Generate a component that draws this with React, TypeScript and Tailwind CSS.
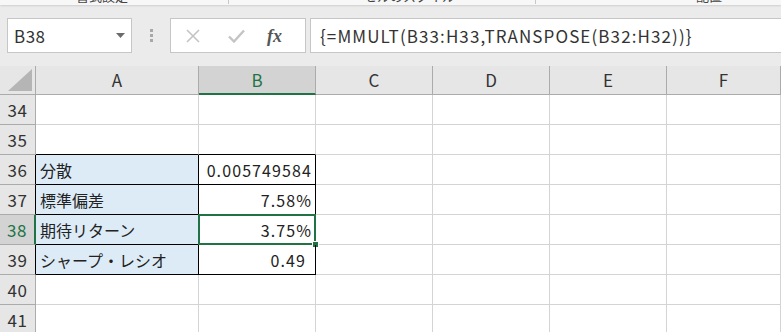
import React from 'react';

const font = { fontFamily: '"Noto Sans CJK JP", "Noto Sans", sans-serif' };

const cols = ['A', 'B', 'C', 'D', 'E', 'F'];

type Row = { n: number; a?: string; b?: string; pad?: boolean };

const rows: Row[] = [
  { n: 34 },
  { n: 35 },
  { n: 36, a: '分散', b: '0.005749584' },
  { n: 37, a: '標準偏差', b: '7.58%' },
  { n: 38, a: '期待リターン', b: '3.75%' },
  { n: 39, a: 'シャープ・レシオ', b: '0.49', pad: true },
  { n: 40 },
  { n: 41 },
];

function inTable(n: number) {
  return n >= 36 && n <= 39;
}

export default function App() {
  return (
    <div className="w-[781px] h-[332px] overflow-hidden bg-[#e6e6e6] text-[#222]" style={font}>
      {/* ribbon remnant */}
      <div className="h-[5px] overflow-hidden bg-[#f7f7f7] shadow-[0_1px_2px_rgba(0,0,0,0.12)] relative">
        <div className="flex text-[13px] leading-[16px] -mt-[12px] text-[#444]">
          <span className="ml-[76px]">書式設定</span>
          <span className="ml-[100px] w-px h-[16px] bg-[#c8c8c8]" />
          <span className="ml-[135px]">セルのスタイル</span>
          <span className="ml-[80px] w-px h-[16px] bg-[#c8c8c8]" />
          <span className="ml-[160px]">配置</span>
        </div>
      </div>

      {/* formula bar */}
      <div className="flex items-center h-[61px] pl-[7px] bg-[#ebebeb]">
        <div className="w-[125px] h-[35px] bg-white border border-[#c6c6c6] flex items-center justify-between pl-[6px] pr-[6px]">
          <span className="text-[17px] text-[#333] tracking-[0.5px]">B38</span>
          <svg width="9" height="5" viewBox="0 0 9 5"><path d="M0 0h9L4.5 5z" fill="#6b6b6b" /></svg>
        </div>
        <div className="w-[38px] flex flex-col items-center gap-[2px]">
          <span className="w-[3px] h-[3px] bg-[#a8a8a8]" />
          <span className="w-[3px] h-[3px] bg-[#a8a8a8]" />
          <span className="w-[3px] h-[3px] bg-[#a8a8a8]" />
        </div>
        <div className="w-[136px] h-[35px] bg-white border border-[#c6c6c6] flex items-center">
          <svg className="ml-[14px]" width="16" height="16" viewBox="0 0 16 16">
            <path d="M2 2l12 12M14 2L2 14" stroke="#c4c4c4" strokeWidth="1.6" />
          </svg>
          <svg className="ml-[27px]" width="17" height="14" viewBox="0 0 17 14">
            <path d="M1 7.5l5 5L16 1.5" stroke="#c4c4c4" strokeWidth="2.4" fill="none" />
          </svg>
          <span
            className="ml-[22px] text-[18px] italic font-bold text-[#555] leading-none"
            style={{ fontFamily: '"Liberation Serif", serif' }}
          >
            fx
          </span>
        </div>
        <div className="ml-[4px] flex-1 h-[35px] bg-white border border-[#c6c6c6] border-r-0 flex items-center pl-[9px]">
          <span className="text-[17px] text-[#333] whitespace-nowrap tracking-[1.1px]">{'{=MMULT(B33:H33,TRANSPOSE(B32:H32))}'}</span>
        </div>
      </div>

      {/* sheet grid */}
      <div className="grid grid-cols-[36px_163px_117px_117px_117px_117px_114px] bg-white">
        {/* header row */}
        <div className="h-[29px] bg-[#e6e6e6] border-r border-b border-[#ababab] flex items-end justify-end p-[3px]">
          <svg width="24" height="22" viewBox="0 0 24 22"><path d="M24 0v22H0z" fill="#b5b5b5" /></svg>
        </div>
        {cols.map((c) =>
          c === 'B' ? (
            <div
              key={c}
              className="h-[29px] bg-[#d3d3d3] border-r border-[#ababab] border-b-2 border-b-[#217346] flex items-center justify-center text-[17px] text-[#217346]"
            >
              {c}
            </div>
          ) : (
            <div
              key={c}
              className="h-[29px] bg-[#e6e6e6] border-r border-b border-[#ababab] flex items-center justify-center text-[17px] text-[#333]"
            >
              {c}
            </div>
          )
        )}

        {rows.map((r) => {
          const sel = r.n === 38;
          const t = inTable(r.n);
          const topOfTable = r.n === 35;
          return (
            <React.Fragment key={r.n}>
              <div
                className={`h-[30px] border-b border-[#ababab] border-r flex items-center justify-center text-[17px] tracking-[0.5px] ${
                  sel
                    ? 'bg-[#d3d3d3] text-[#217346] border-r-2 border-r-[#217346]'
                    : t
                    ? 'bg-[#e6e6e6] text-[#333] border-r-black'
                    : 'bg-[#e6e6e6] text-[#333] border-r-[#ababab]'
                }`}
              >
                {r.n}
              </div>
              <div
                className={`h-[30px] border-r border-b flex items-center pl-[4px] text-[16px] ${
                  t ? 'bg-[#ddebf7] border-black' : topOfTable ? 'border-r-[#d4d4d4] border-b-black' : 'border-[#d4d4d4]'
                }`}
              >
                {r.a}
              </div>
              <div
                className={`h-[30px] border-r border-b flex items-center justify-end text-[16px] tracking-[1.1px] relative ${
                  r.pad ? 'pr-[9px]' : 'pr-[3px]'
                } ${t ? 'border-black' : topOfTable ? 'border-r-[#d4d4d4] border-b-black' : 'border-[#d4d4d4]'}`}
              >
                {r.b}
                {sel && (
                  <>
                    <div className="absolute -left-[1px] -top-[1px] -right-[1px] -bottom-[1px] border-2 border-[#217346] pointer-events-none" />
                    <div className="absolute -right-[4px] -bottom-[4px] w-[7px] h-[7px] bg-[#217346] border border-white" />
                  </>
                )}
              </div>
              {['C', 'D', 'E', 'F'].map((c) => (
                <div key={c} className="h-[30px] border-r border-b border-[#d4d4d4]" />
              ))}
            </React.Fragment>
          );
        })}
      </div>
    </div>
  );
}
